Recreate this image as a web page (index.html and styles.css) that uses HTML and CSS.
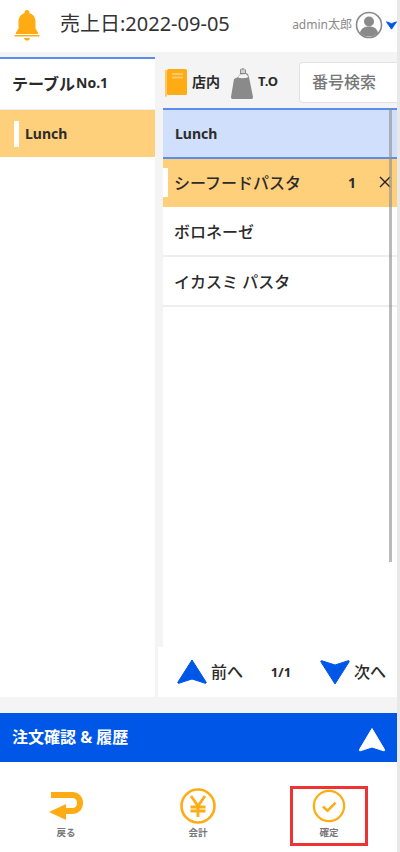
FILE: index.html
```html
<!DOCTYPE html>
<html lang="ja">
  <head>
    <meta charset="utf-8" />
    <meta name="viewport" content="width=device-width, initial-scale=1.0" />
    <title>Order</title>
    <link rel="stylesheet" href="styles.css">
  </head>

  <body>
    <div class="page">
      <header class="top-bar">
        <svg class="bell" viewBox="0 0 28 32" width="28" height="32">
          <path d="M14 1c-1.500 0-2.500 1-2.500 2.500v.7C7.500 5.400 5.500 8.500 5.500 12.500v7L3 23.500c-.6 1-.2 1.500.8 1.500h20.400c1 0 1.400-.5.800-1.500l-2.500-4v-7c0-4-2-7.100-6-8.300v-.7C16.500 2 15.500 1 14 1z" fill="#ffac14"/>
          <path d="M1.500 26h25v1.500h-25z" fill="#ffac14"/>
          <path d="M11 29h6c-.5 2-1.500 2.500-3 2.500s-2.500-.5-3-2.500z" fill="#ffac14"/>
        </svg>
        <div class="sales-date">売上日:2022-09-05</div>
        <div class="user">
          <span class="user-name">admin太郎</span>
          <svg class="avatar" viewBox="0 0 28 28" width="28" height="28">
            <circle cx="14" cy="14" r="12.500" fill="#fff" stroke="#8a8a8a" stroke-width="1.600"/>
            <circle cx="14" cy="10.500" r="5" fill="#8a8a8a"/>
            <path d="M5 22c1-5 4.500-6.500 9-6.500s8 1.500 9 6.500c-2.500 2.400-5.500 3.500-9 3.500s-6.500-1.100-9-3.500z" fill="#8a8a8a"/>
          </svg>
          <svg class="caret" viewBox="0 0 12 10" width="11" height="10">
            <path d="M0.500 1.500L6 3.500l5.500-2L6 9.500z" fill="#0057e7" stroke="#0057e7" stroke-linejoin="round"/>
          </svg>
        </div>
      </header>

      <div class="main">
        <aside class="side">
          <div class="table-name">テーブル<span class="table-no">No.1</span></div>
          <div class="side-row">
            <span class="side-mark"></span>
            <span>Lunch</span>
          </div>
        </aside>

        <section class="content">
          <div class="tools">
            <div class="tool">
              <svg viewBox="0 0 24 30" width="24" height="30">
                <rect x="3" y="1" width="20" height="26" rx="1.500" fill="#ffac14"/>
                <path d="M1 2v25.500c0 .5.500 1.500 1 1.500s1-1 1-1.500V2z" fill="#ffc766"/>
                <rect x="8" y="5" width="11" height="2" fill="#ffc766"/>
                <rect x="8" y="8.500" width="11" height="2" fill="#ffc766"/>
              </svg>
              <span class="tool-label">店内</span>
            </div>
            <div class="tool tool-to">
              <svg viewBox="0 0 24 34" width="24" height="34">
                <path d="M8 11l2-3V3.500L13 2l3 2v3l2 1 1 3 4 20c0 1-.5 2-1.500 2H2.500C1.500 33 1 32 1 31l3-18z" fill="#8a8a8a"/>
                <path d="M8 11.500l2-3 6-.5 2.500 3c-3 1.500-7.500 1.500-10.500.5z" fill="#f4f4f4"/>
                <path d="M11 3.500h4v3.500h-4z" fill="#d0d0d0"/>
              </svg>
              <span class="tool-label tool-label-to">T.O</span>
            </div>
            <div class="search">番号検索</div>
          </div>

          <div class="list">
            <div class="list-head">Lunch</div>
            <div class="item item-on">
              <span class="item-mark"></span>
              <span class="item-name">シーフードパスタ</span>
              <span class="item-qty">1</span>
              <svg class="item-del" viewBox="0 0 12 12" width="12" height="12">
                <path d="M1 1l10 10M11 1L1 11" stroke="#222" stroke-width="1.400" fill="none"/>
              </svg>
            </div>
            <div class="item"><span class="item-name">ボロネーゼ</span></div>
            <div class="item"><span class="item-name">イカスミ パスタ</span></div>
            <div class="list-scroll"></div>
          </div>

          <div class="pager">
            <div class="pager-btn">
              <svg viewBox="0 0 32 28" width="32" height="28">
                <path d="M16 2L30 24c.5 1 0 1.500-1 1.200L16 21 3 25.200c-1 .3-1.500-.2-1-1.200z" fill="#0057e7" stroke="#0057e7" stroke-linejoin="round"/>
              </svg>
              <span class="pager-text">前へ</span>
            </div>
            <div class="pager-num">1/1</div>
            <div class="pager-btn">
              <svg viewBox="0 0 32 28" width="32" height="28">
                <path d="M16 26L30 4c.5-1 0-1.500-1-1.200L16 7 3 2.800c-1-.3-1.500.2-1 1.200z" fill="#0057e7" stroke="#0057e7" stroke-linejoin="round"/>
              </svg>
              <span class="pager-text">次へ</span>
            </div>
          </div>
        </section>
      </div>

      <div class="order-bar">
        <span class="order-title">注文確認 &amp; 履歴</span>
        <svg class="order-arrow" viewBox="0 0 28 26" width="28" height="26">
          <path d="M14 1.500L26.500 22.500c.5 1 0 1.500-1 1.200L14 20 2.500 23.700c-1 .3-1.500-.2-1-1.200z" fill="#fff" stroke="#fff" stroke-linejoin="round"/>
        </svg>
      </div>

      <footer class="foot">
        <div class="foot-btn">
          <svg viewBox="0 0 36 36" width="36" height="36">
            <path d="M3 7h21c5 0 8 3 8 8s-3 8-8 8H16" fill="none" stroke="#ffac14" stroke-width="6"/>
            <path d="M18 16v16L1 24z" fill="#ffac14"/>
          </svg>
          <span>戻る</span>
        </div>
        <div class="foot-btn">
          <svg viewBox="0 0 36 36" width="36" height="36">
            <circle cx="18" cy="18" r="16.500" fill="none" stroke="#ffac14" stroke-width="2.600"/>
            <path d="M11 8l7 10 7-10M10.500 19h15M10.500 23h15M18 18v11" fill="none" stroke="#ffac14" stroke-width="2.800"/>
          </svg>
          <span>会計</span>
        </div>
        <div class="foot-btn foot-btn-marked">
          <svg viewBox="0 0 36 36" width="34" height="34">
            <circle cx="18" cy="18" r="16" fill="none" stroke="#ffac14" stroke-width="2.400"/>
            <path d="M11.500 18.500l5 4.500 8.500-8.500" fill="none" stroke="#ffac14" stroke-width="2.600"/>
          </svg>
          <span>確定</span>
        </div>
      </footer>
    </div>
  </body>
</html>
```

FILE: styles.css
```css
* {
  box-sizing: border-box;
}

body {
  margin: 0;
  background-color: #fff;
  color: #2b2b2b;
  font-family: "Noto Sans", "Noto Sans CJK JP", sans-serif;
}

.page {
  display: flex;
  flex-direction: column;
  width: 400px;
  height: 852px;
  overflow: hidden;
  border-right: 3px solid #e8e8e8;
  background-color: #f4f4f4;
}

.top-bar {
  display: flex;
  align-items: center;
  flex-shrink: 0;
  height: 52px;
  padding: 0 0 2px 13px;
  background-color: #fff;
}

.sales-date {
  margin-left: 19px;
  padding-bottom: 6px;
  font-size: 20px;
  color: #333;
}

.user {
  display: flex;
  align-items: center;
  margin-left: auto;
}

.user-name {
  padding-bottom: 3px;
  font-size: 12px;
  color: #8a8a8a;
}

.avatar {
  margin-left: 3px;
}

.caret {
  margin-left: 3px;
}

.main {
  display: flex;
  flex: 1;
  gap: 8px;
  margin-top: 5px;
  min-height: 0;
}

.side {
  width: 155px;
  background-color: #fff;
  border-top: 2px solid #5b8def;
}

.table-name {
  display: flex;
  align-items: center;
  height: 51px;
  padding: 0 0 3px 12px;
  font-size: 16px;
  font-weight: 700;
  border-bottom: 1px solid #eee;
}

.table-no {
  margin-left: 1px;
  font-size: 14px;
}

.side-row {
  display: flex;
  align-items: center;
  height: 47px;
  padding-left: 14px;
  background-color: #ffd07c;
  font-size: 14px;
  font-weight: 700;
}

.side-mark {
  width: 5px;
  height: 26px;
  margin-right: 6px;
  background-color: #fff;
}

.content {
  display: flex;
  flex: 1;
  flex-direction: column;
  min-width: 0;
}

.tools {
  display: flex;
  align-items: center;
  flex-shrink: 0;
  height: 51px;
  padding-left: 1px;
}

.tool {
  display: flex;
  align-items: center;
  gap: 4px;
}

.tool-to {
  margin-left: 10px;
}

.tool-label {
  padding-bottom: 4px;
  font-size: 14px;
  font-weight: 700;
}

.tool-label-to {
  font-size: 13px;
}

.search {
  display: flex;
  align-items: center;
  width: 98px;
  height: 41px;
  margin-left: auto;
  padding: 0 0 3px 12px;
  background-color: #fff;
  border: 1px solid #dfe3e8;
  border-right: 0;
  border-radius: 4px 0 0 4px;
  color: #777;
  font-size: 16px;
  font-weight: 500;
}

.list {
  position: relative;
  flex: 1;
  background-color: #fff;
}

.list-head {
  display: flex;
  align-items: center;
  height: 51px;
  padding-left: 12px;
  background-color: #cfdffc;
  border-top: 2px solid #5b8def;
  border-bottom: 2px solid #5b8def;
  font-size: 14px;
  font-weight: 700;
}

.item {
  position: relative;
  display: flex;
  align-items: center;
  height: 50px;
  padding-left: 11px;
  border-bottom: 2px solid #eee;
  font-size: 16px;
  font-weight: 500;
}

.item-on {
  height: 48px;
  padding-bottom: 2px;
  background-color: #ffd07c;
  border-bottom: 0;
}

.item-mark {
  position: absolute;
  left: 0;
  top: 9px;
  width: 5px;
  height: 29px;
  background-color: #fff;
}

.item-qty {
  margin-left: auto;
  font-size: 14px;
  font-weight: 700;
}

.item-del {
  margin: 0 6px 0 23px;
}

.list-scroll {
  position: absolute;
  top: 0;
  right: 5px;
  bottom: 85px;
  width: 3px;
  background-color: rgba(140, 140, 140, 0.6);
}

.pager {
  display: flex;
  align-items: center;
  justify-content: space-between;
  flex-shrink: 0;
  height: 50px;
  margin-left: -5px;
  padding: 0 11px 0 18px;
  background-color: #fff;
  font-size: 16px;
  font-weight: 500;
}

.pager-btn {
  display: flex;
  align-items: center;
  gap: 3px;
}

.pager-text {
  padding-bottom: 2px;
}

.pager-num {
  font-size: 13px;
  font-weight: 700;
}

.order-bar {
  display: flex;
  align-items: center;
  justify-content: space-between;
  flex-shrink: 0;
  height: 49px;
  margin-top: 16px;
  padding: 0 11px 0 12px;
  background-color: #0057e7;
  color: #fff;
  font-size: 16px;
  font-weight: 700;
}

.order-title {
  padding-bottom: 4px;
}

.order-arrow {
  margin-top: 5px;
}

.foot {
  display: grid;
  grid-template-columns: 132px 132px 130px;
  flex-shrink: 0;
  height: 90px;
  background-color: #fff;
}

.foot-btn {
  display: flex;
  flex-direction: column;
  align-items: center;
  gap: 3px;
  padding-top: 26px;
  color: #777;
  font-size: 9.500px;
  line-height: 12px;
  font-weight: 700;
}

.foot-btn-marked {
  justify-self: center;
  gap: 4px;
  width: 78px;
  height: 60px;
  margin-top: 24px;
  padding-top: 0;
  border: 3px solid #ee3333;
}
```
